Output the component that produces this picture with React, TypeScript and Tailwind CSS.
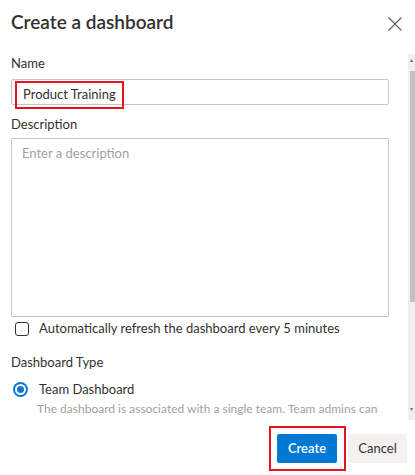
const font = { fontFamily: '"Segoe UI", Lato, "Liberation Sans", sans-serif' }

export default function App() {
  return (
    <div className="w-[415px] h-[475px] bg-white text-[#323130] overflow-hidden flex flex-col" style={font}>
      <header className="h-[54px] flex items-start justify-between pl-[11px] pr-[13px] pt-[9px]">
        <h1 className="text-[19px] font-semibold leading-[26px]">Create a dashboard</h1>
        <button className="mt-[8px] text-[#605e5c]">
          <svg width="14" height="14" viewBox="0 0 14 14" stroke="currentColor" strokeWidth="1.1">
            <path d="M0.5 0.5 L13.5 13.5 M13.5 0.5 L0.5 13.5" />
          </svg>
        </button>
      </header>

      <div className="flex h-[366px]">
        <div className="flex-1 overflow-hidden pl-[11px] pr-[19px]">
          <label className="block text-[13px] leading-[19px]">Name</label>
          <div className="mt-[6px] h-[26px] border border-[#c8c6c4] rounded-[2px] flex items-start">
            <div className="ml-[3px] mt-[1px] h-[28px] px-[6px] border-2 border-[#e81123] flex items-center text-[13px]">
              Product Training
            </div>
          </div>
          <label className="block text-[13px] leading-[19px] mt-[10px]">Description</label>
          <div className="mt-[4px] h-[179px] border border-[#c8c6c4] rounded-[2px] px-[10px] pt-[5px] text-[13px] leading-[19px] text-[#a19f9d]">
            Enter a description
          </div>
          <label className="flex items-center gap-[10px] mt-[2px] ml-[4px] text-[13px] leading-[19px]">
            <span className="w-[14px] h-[14px] border border-[#323130] rounded-[3px]" />
            Automatically refresh the dashboard every 5 minutes
          </label>
          <div className="text-[13px] leading-[19px] mt-[15px]">Dashboard Type</div>
          <div className="flex items-center gap-[11px] mt-[8px] ml-[2px] text-[13px] leading-[19px]">
            <span className="w-[15px] h-[15px] rounded-full bg-[#0078d4] flex items-center justify-center">
              <span className="w-[11px] h-[11px] rounded-full bg-[#0078d4] border-2 border-white" />
            </span>
            Team Dashboard
          </div>
          <p className="ml-[26px] mt-[2px] text-[12px] leading-[16px] text-[#a19f9d] whitespace-nowrap">
            The dashboard is associated with a single team. Team admins can
          </p>
        </div>
        <div className="w-[7px] bg-[#efefef] flex flex-col items-center">
          <span className="text-[6px] leading-[10px] text-[#707070] h-[17px] pt-[1px]">▴</span>
          <div className="w-[5px] ml-[2px] h-[231px] bg-[#c1c1c1]" />
          <div className="flex-1" />
          <span className="text-[6px] leading-[10px] text-[#707070] mb-[6px]">▾</span>
        </div>
      </div>

      <footer className="flex justify-end items-center pr-[8px] mt-[6px] gap-[2px]">
        <div className="border-2 border-[#e81123] p-[6px] pr-[7px]">
          <button className="w-[60px] h-[29px] bg-[#0078d4] text-white text-[13px] font-semibold rounded-[2px]">
            Create
          </button>
        </div>
        <button className="w-[59px] h-[29px] bg-[#f3f2f1] text-[13px] rounded-[2px]">Cancel</button>
      </footer>
    </div>
  )
}
